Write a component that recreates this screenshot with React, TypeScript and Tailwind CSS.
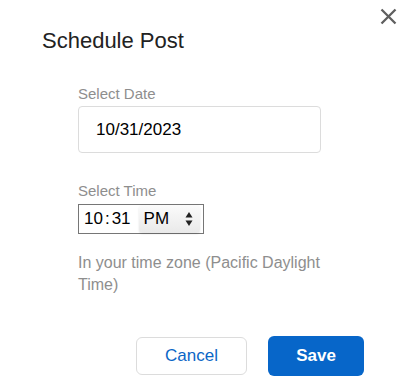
import React from "react";

const CloseIcon = () => (
  <svg width="17" height="17" viewBox="0 0 17 17" fill="none">
    <path d="M1.5 1.5L15.5 15.5M15.5 1.5L1.5 15.5" stroke="#5f5f5f" strokeWidth="2.3" />
  </svg>
);

const Spinner = () => (
  <svg width="8" height="18" viewBox="0 0 8 18">
    <path d="M4 2L7.5 7.5H0.5Z" fill="#222" />
    <path d="M4 16L7.5 10.5H0.5Z" fill="#222" />
  </svg>
);

export default function App() {
  return (
    <div className="relative w-[408px] h-[387px] bg-white font-['Liberation_Sans',Arial,sans-serif]">
      <button className="absolute left-[380px] top-[8px]" aria-label="Close">
        <CloseIcon />
      </button>

      <div className="pt-[27px] pl-[42px]">
        <h2 className="text-[22px] leading-[28px] text-[#222]">Schedule Post</h2>
      </div>

      <div className="ml-[78px] w-[243px] mt-[30px] flex flex-col">
        <label className="text-[15px] leading-[18px] text-[#8e8e8e]">Select Date</label>
        <div className="mt-[3px] h-[47px] border border-[#dcdcdc] rounded-[4px] flex items-center pl-[17px] text-[17px] text-black">
          10/31/2023
        </div>

        <label className="mt-[29px] text-[15px] leading-[18px] text-[#8e8e8e]">Select Time</label>
        <div className="mt-[4px] w-[126px] h-[30px] border border-[#767676] flex items-center pl-[5px] pr-[3px] text-[17px] text-black">
          <span>10</span>
          <span className="px-[2px]">:</span>
          <span>31</span>
          <div className="ml-[8px] flex-1 h-[28px] rounded-[4px] bg-gradient-to-b from-[#fbfbfb] to-[#e9e9e9] shadow-[0_1px_2px_rgba(0,0,0,0.12)] flex items-center pl-[5px] pr-[7px] justify-between">
            <span>PM</span>
            <Spinner />
          </div>
        </div>

        <p className="mt-[18px] text-[16px] leading-[22px] text-[#8e8e8e]">
          In your time zone (Pacific Daylight Time)
        </p>
      </div>

      <div className="mt-[40px] flex justify-end items-center gap-[21px] pr-[44px]">
        <button className="w-[111px] h-[38px] rounded-[6px] border border-[#dcdcdc] bg-white text-[17px] text-[#0b66c6]">
          Cancel
        </button>
        <button className="w-[96px] h-[40px] rounded-[6px] bg-[#0766c9] text-[17px] font-bold text-white">
          Save
        </button>
      </div>
    </div>
  );
}
